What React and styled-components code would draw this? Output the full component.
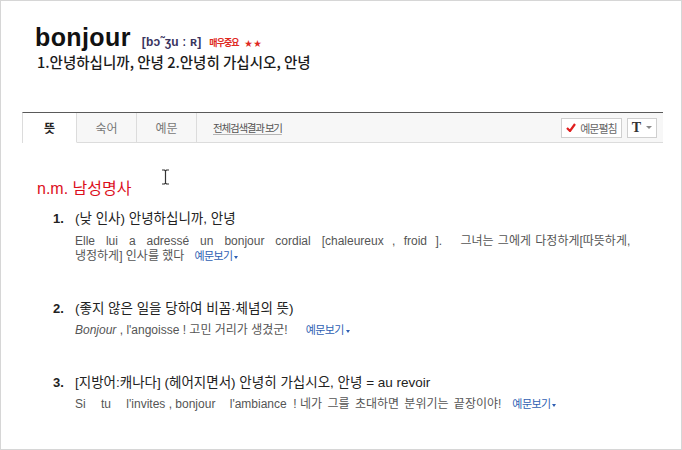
import React from 'react';
import styled, { createGlobalStyle } from 'styled-components';

const GlobalStyle = createGlobalStyle`
  html, body {
    margin: 0;
    padding: 0;
    background: #fff;
  }
  body {
    font-family: "Liberation Sans", Arial, "Noto Sans CJK KR", sans-serif;
    color: #333;
  }
`;

function App() {
  const entries = [
    {
      num: 1,
      title: '(낮 인사) 안녕하십니까, 안녕',
      first: (
        <>
          <Spaced $ws={7.6}>Elle lui a adressé un bonjour cordial </Spaced>
          <Spaced $ws={5}>[chaleureux , froid ]. </Spaced>
          <Spaced $ws={1} $indent={10}>그녀는 그에게 다정하게[따뜻하게,</Spaced>
        </>
      ),
      example: <>냉정하게] 인사를 했다</>,
      gap: 10,
    },
    {
      num: 2,
      title: '(좋지 않은 일을 당하여 비꼼·체념의 뜻)',
      example: (
        <><em>Bonjour</em> , l'angoisse ! 고민 거리가 생겼군!</>
      ),
      gap: 18,
    },
    {
      num: 3,
      title: '[지방어:캐나다] (헤어지면서) 안녕히 가십시오, 안녕 = au revoir',
      example: (
        <>
          <Spaced $ws={12}>Si tu l'invites</Spaced> , <Spaced $ws={11}>bonjour l'ambiance</Spaced>
          {'  ! '}
          <Spaced $ws={2}>네가 그를 초대하면 분위기는 끝장이야!</Spaced>
        </>
      ),
      gap: 11,
    },
  ];

  return (
    <>
      <GlobalStyle />
      <Frame>
        <Head>
          <WordRow>
            <Headword>bonjour</Headword>
            <Pron>[bɔ˜ʒu ː ʀ]</Pron>
            <Importance>매우중요</Importance>
            <Stars>★★</Stars>
          </WordRow>
          <Summary>1.안녕하십니까, 안녕 2.안녕히 가십시오, 안녕</Summary>
        </Head>

        <TabBar>
          <Tab $active>뜻</Tab>
          <Tab>숙어</Tab>
          <Tab>예문</Tab>
          <AllLink>전체검색결과 보기</AllLink>
          <Tools>
            <ToolButton>
              <svg width="10" height="9" viewBox="0 0 10 9">
                <path d="M1 5 L4 8 L9 1" fill="none" stroke="#e01e1e" strokeWidth="2.2" />
              </svg>
              <span>예문펼침</span>
            </ToolButton>
            <ToolButton $narrow>
              <FontT>T</FontT>
              <Caret />
            </ToolButton>
          </Tools>
        </TabBar>

        <Body>
          <PartOfSpeech>n.m. 남성명사</PartOfSpeech>
          <Cursor width="9" height="16" viewBox="0 0 9 16">
            <path d="M1 1 H3.5 L4.5 2 L5.5 1 H8 M4.5 2 V14 M1 15 H3.5 L4.5 14 L5.5 15 H8" fill="none" stroke="#333" strokeWidth="1.2" />
          </Cursor>
          <EntryList>
            {entries.map(e => (
              <Entry key={e.num}>
                <Num>{e.num}.</Num>
                <EntryBody>
                  <EntryTitle>{e.title}</EntryTitle>
                  <Example $lead={e.first ? 6 : 4}>
                    {e.first && <FullLine>{e.first}</FullLine>}
                    {e.example}
                    <MoreLink $gap={e.gap}>예문보기<SmallCaret /></MoreLink>
                  </Example>
                </EntryBody>
              </Entry>
            ))}
          </EntryList>
        </Body>
      </Frame>
    </>
  );
}

const Frame = styled.div`
  position: relative;
  box-sizing: border-box;
  width: 682px;
  height: 450px;
  border: 1px solid #d6d6d6;
  padding: 0 18px 0 21px;
  overflow: hidden;
`;

const Head = styled.div`
  padding: 22px 0 0 13px;
  height: 111px;
  box-sizing: border-box;
`;

const WordRow = styled.div`
  display: flex;
  align-items: baseline;
`;

const Headword = styled.h1`
  margin: 0;
  font-size: 25px;
  line-height: 28px;
  font-weight: bold;
  color: #111;
  letter-spacing: 0.4px;
`;

const Pron = styled.span`
  margin-left: 11px;
  font-size: 12px;
  font-weight: bold;
  letter-spacing: 0.2px;
  color: #3a3560;
`;

const Importance = styled.span`
  margin-left: 8px;
  font-family: "Noto Sans CJK KR", sans-serif;
  font-size: 9px;
  font-weight: bold;
  letter-spacing: -1px;
  color: #e02a1f;
`;

const Stars = styled.span`
  margin-left: 6px;
  font-size: 8px;
  color: #e02a1f;
  letter-spacing: 1px;
`;

const Summary = styled.div`
  margin: 2px 0 0 2px;
  font-family: "Noto Sans CJK KR", sans-serif;
  font-size: 14.5px;
  line-height: 18px;
  font-weight: 500;
  color: #1a1a1a;
`;

const TabBar = styled.div`
  display: flex;
  align-items: stretch;
  height: 31px;
  box-sizing: border-box;
  border-top: 1px solid #5a5a5a;
  background: #f7f7f7;
  border-left: 1px solid #dcdcdc;
`;

const Tab = styled.div`
  display: flex;
  align-items: center;
  justify-content: center;
  box-sizing: border-box;
  width: ${p => (p.$active ? '54px' : '60px')};
  border-right: 1px solid #dcdcdc;
  border-bottom: 1px solid ${p => (p.$active ? '#fff' : '#dcdcdc')};
  background: ${p => (p.$active ? '#fff' : 'transparent')};
  font-family: "Noto Sans CJK KR", sans-serif;
  font-size: 12px;
  font-weight: ${p => (p.$active ? 'bold' : 'normal')};
  color: ${p => (p.$active ? '#222' : '#777')};
`;

const AllLink = styled.div`
  display: flex;
  align-items: center;
  padding-left: 16px;
  flex: 0 0 auto;
  border-bottom: 1px solid #dcdcdc;
  font-family: "Noto Sans CJK KR", sans-serif;
  font-size: 10.5px;
  letter-spacing: -1.2px;
  color: #555;
  text-decoration: underline;
  text-decoration-color: #b5b5b5;
  text-underline-offset: 2px;
`;

const Tools = styled.div`
  flex: 1;
  display: flex;
  align-items: center;
  justify-content: flex-end;
  gap: 5px;
  padding-right: 6px;
  border-bottom: 1px solid #dcdcdc;
`;

const ToolButton = styled.div`
  display: flex;
  align-items: center;
  justify-content: center;
  gap: ${p => (p.$narrow ? '6px' : '4px')};
  box-sizing: border-box;
  height: 20px;
  width: ${p => (p.$narrow ? '30px' : '61px')};
  border: 1px solid #cfcfcf;
  background: #fff;
  font-family: "Noto Sans CJK KR", sans-serif;
  font-size: 11px;
  letter-spacing: -1px;
  color: #666;
`;

const FontT = styled.span`
  font-family: "Liberation Serif", serif;
  font-weight: bold;
  font-size: 14px;
  color: #333;
`;

const Caret = styled.span`
  width: 0;
  height: 0;
  border-left: 3px solid transparent;
  border-right: 3px solid transparent;
  border-top: 3px solid #888;
`;

const Body = styled.div`
  position: relative;
  padding: 36px 0 0 15px;
`;

const PartOfSpeech = styled.div`
  font-family: "Liberation Sans", "Noto Sans CJK KR", sans-serif;
  font-size: 16px;
  line-height: 20px;
  color: #dc0f1c;
`;

const Cursor = styled.svg`
  position: absolute;
  left: 139px;
  top: 26px;
`;

const EntryList = styled.div`
  display: flex;
  flex-direction: column;
  gap: 37px;
  margin-top: 11px;
  padding-left: 16px;
  padding-right: 31px;
`;

const Entry = styled.div`
  display: flex;
`;

const Num = styled.div`
  width: 22px;
  flex: 0 0 22px;
  font-size: 13px;
  line-height: 18px;
  font-weight: bold;
  color: #222;
`;

const EntryBody = styled.div`
  flex: 1;
`;

const EntryTitle = styled.div`
  font-family: "Liberation Sans", "Noto Sans CJK KR", sans-serif;
  font-size: 13.5px;
  line-height: 18px;
  color: #222;
`;

const Example = styled.div`
  margin-top: ${p => p.$lead}px;
  font-family: "Liberation Sans", "Noto Sans CJK KR", sans-serif;
  font-size: 12px;
  line-height: 14px;
  color: #555;
  word-break: keep-all;
  white-space: pre-wrap;
  em { font-style: italic; }
`;

const FullLine = styled.div`
  white-space: nowrap;
`;

const Spaced = styled.span`
  word-spacing: ${p => p.$ws}px;
  margin-left: ${p => p.$indent || 0}px;
`;

const MoreLink = styled.span`
  margin-left: ${p => p.$gap}px;
  font-family: "Noto Sans CJK KR", sans-serif;
  font-size: 11px;
  letter-spacing: -0.6px;
  color: #2f5fb3;
  white-space: nowrap;
`;

const SmallCaret = styled.span`
  display: inline-block;
  vertical-align: middle;
  margin-left: 2px;
  width: 0;
  height: 0;
  border-left: 2.5px solid transparent;
  border-right: 2.5px solid transparent;
  border-top: 3px solid #2f5fb3;
`;

export default App;
